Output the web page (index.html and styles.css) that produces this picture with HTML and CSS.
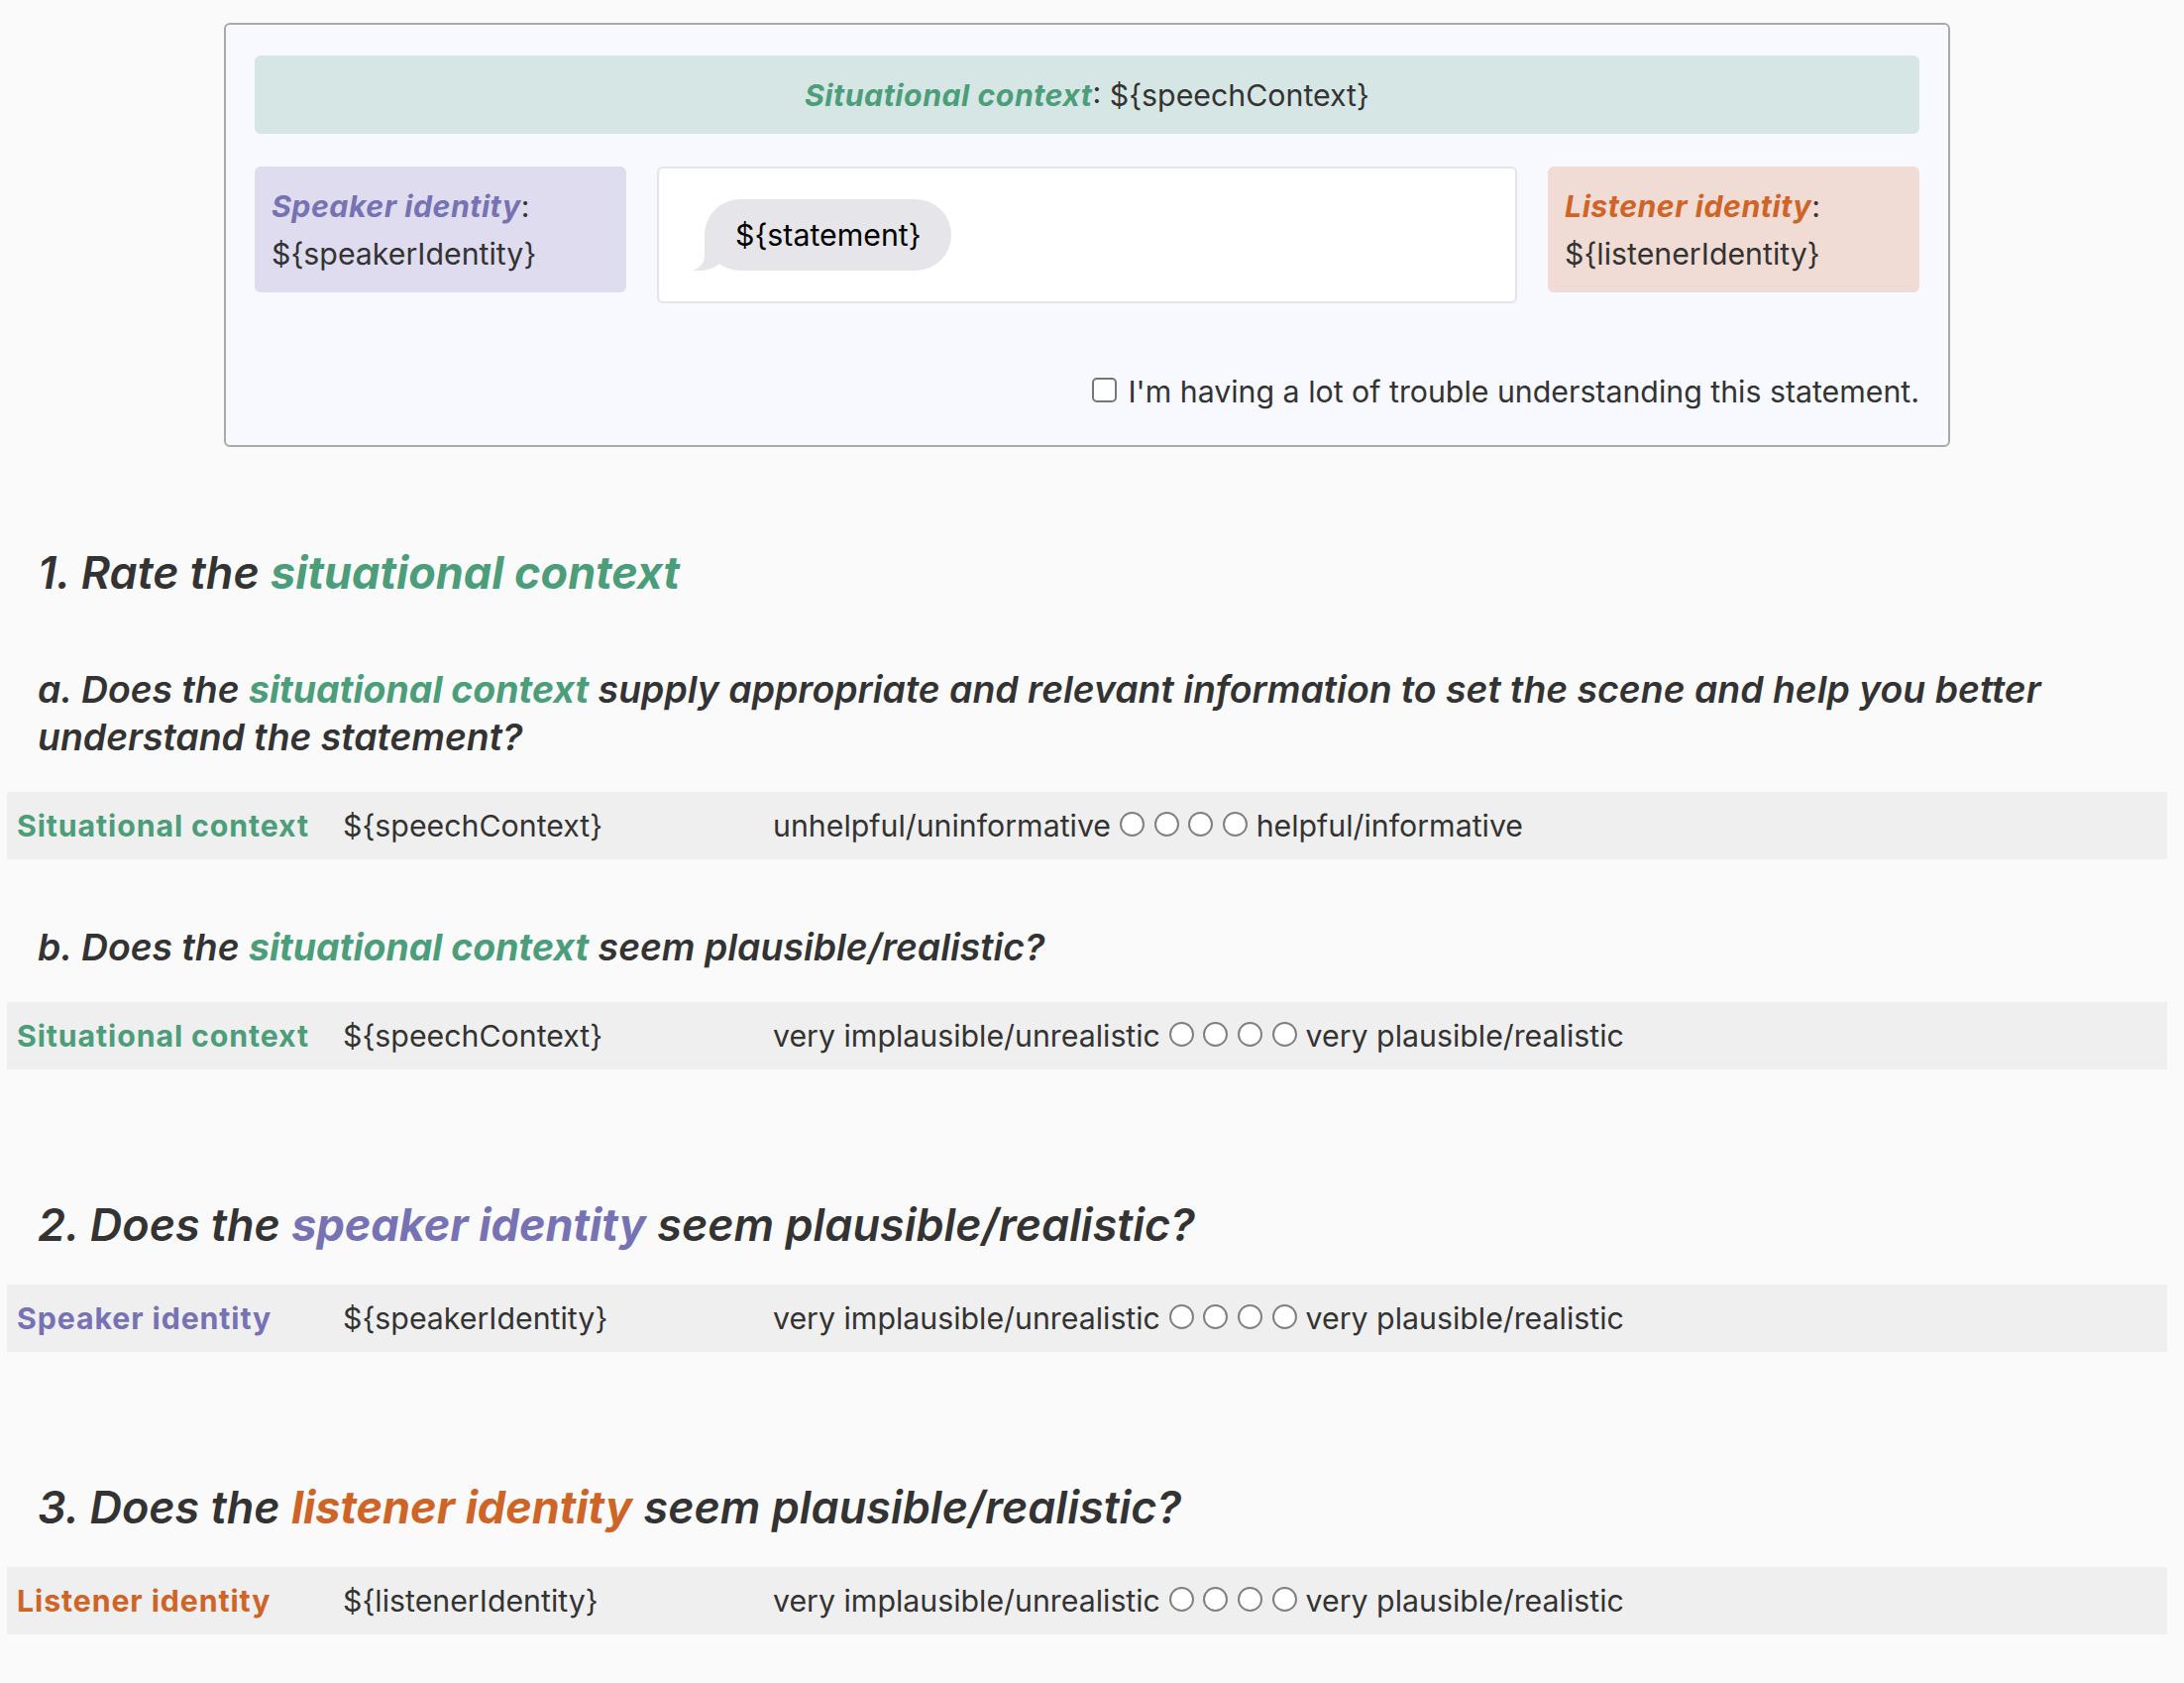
FILE: index.html
```html
<!DOCTYPE html>
<html lang="en">
<head>
  <meta charset="UTF-8">
  <meta name="viewport" content="width=device-width, initial-scale=1.0">
  <title> Statement rating </title>
  <link rel="stylesheet" href="styles.css">
</head>
<body>
  <div class="page">
    <div class="stimulus">
      <div class="context_bar"><span class="tag c_context">Situational context</span>: ${speechContext}</div>
      <div class="identities">
        <div class="identity speaker"><span class="tag c_speaker">Speaker identity</span>:<br>${speakerIdentity}</div>
        <div class="statement">
          <p class="bubble">${statement}</p>
        </div>
        <div class="identity listener"><span class="tag c_listener">Listener identity</span>:<br>${listenerIdentity}</div>
      </div>
      <label class="trouble"><input type="checkbox" class="check"> I'm having a lot of trouble understanding this statement.</label>
    </div>

    <section class="block first">
      <h2>1. Rate the <span class="hl c_context">situational context</span></h2>
      <h3>a. Does the <span class="hl c_context">situational context</span> supply appropriate and relevant information to set the scene and help you better understand the statement?</h3>
      <div class="rating_row">
        <span class="label c_context">Situational context</span>
        <span class="value">${speechContext}</span>
        <span class="scale">unhelpful/uninformative <input type="radio" name="ctx_help"> <input type="radio" name="ctx_help"> <input type="radio" name="ctx_help"> <input type="radio" name="ctx_help"> helpful/informative</span>
      </div>
      <h3 class="after_row">b. Does the <span class="hl c_context">situational context</span> seem plausible/realistic?</h3>
      <div class="rating_row">
        <span class="label c_context">Situational context</span>
        <span class="value">${speechContext}</span>
        <span class="scale">very implausible/unrealistic <input type="radio" name="ctx_real"> <input type="radio" name="ctx_real"> <input type="radio" name="ctx_real"> <input type="radio" name="ctx_real"> very plausible/realistic</span>
      </div>
    </section>

    <section class="block">
      <h2>2. Does the <span class="hl c_speaker">speaker identity</span> seem plausible/realistic?</h2>
      <div class="rating_row">
        <span class="label c_speaker">Speaker identity</span>
        <span class="value">${speakerIdentity}</span>
        <span class="scale">very implausible/unrealistic <input type="radio" name="spk_real"> <input type="radio" name="spk_real"> <input type="radio" name="spk_real"> <input type="radio" name="spk_real"> very plausible/realistic</span>
      </div>
    </section>

    <section class="block">
      <h2>3. Does the <span class="hl c_listener">listener identity</span> seem plausible/realistic?</h2>
      <div class="rating_row">
        <span class="label c_listener">Listener identity</span>
        <span class="value">${listenerIdentity}</span>
        <span class="scale">very implausible/unrealistic <input type="radio" name="lis_real"> <input type="radio" name="lis_real"> <input type="radio" name="lis_real"> <input type="radio" name="lis_real"> very plausible/realistic</span>
      </div>
    </section>
  </div>
</body>
</html>
```

FILE: styles.css
```css
html, body{  margin: 0;  padding: 0;  }
body{
  background: #fafafa;  color: #333;
  font-family: "Inter", "Noto Sans", "Liberation Sans", sans-serif;  font-size: 30.3px;  line-height: 48px;
}
h2, h3, p{  margin: 0;  }
.page{  padding: 0 17px 46px 7px;  }

/* colours per role */
.c_context{   color: #4c9e7b;  }
.c_speaker{   color: #7672b4;  }
.c_listener{  color: #cf6427;  }
.tag{  font-weight: 700;  font-style: italic;  letter-spacing: 0.5px;  }
.hl{   font-weight: 700;  }

/* stimulus card */
.stimulus{
  box-sizing: border-box;  width: 1742px;  margin: 23px auto 0;
  padding: 31px 29px 30px;  background: #f8f9fe;  border: 2px solid #a9a9a9;  border-radius: 6px;
}
.context_bar{
  background: #d6e6e4;  border-radius: 6px;  padding: 16px 0 15px;  text-align: center;
}
.identities{
  display: grid;  grid-template-columns: 375px 1fr 375px;  column-gap: 31px;  align-items: start;
  margin-top: 33px;
}
.identity{  border-radius: 6px;  padding: 16px 17px 15px;  }
.speaker{   background: #dedcee;  }
.listener{  background: #f0dcd5;  }
.statement{
  background: #fff;  border: 2px solid #e4e4e9;  border-radius: 6px;  padding: 31px 46px;
}
.bubble{
  position: relative;  display: inline-block;  background: #e5e5ea;  color: #000;
  line-height: 38px;  padding: 17px 30px 17px 31px;  border-radius: 36px;
}
.bubble::before{
  content: "";  position: absolute;  bottom: 0;  left: -11px;  width: 32px;  height: 34px;
  background: #e5e5ea;  border-bottom-right-radius: 26px 20px;
}
.bubble::after{
  content: "";  position: absolute;  bottom: 0;  left: -40px;  width: 40px;  height: 34px;
  background: #fff;  border-bottom-right-radius: 15px;
}
.trouble{  display: block;  text-align: right;  margin-top: 65px;  }
.check{
  appearance: none;  width: 25px;  height: 25px;  margin: 0 3px 0 0;  vertical-align: baseline;
  background: #fff;  border: 2px solid #767676;  border-radius: 5px;  box-sizing: border-box;
}

/* questions */
.block{  margin-top: 130px;  }
.block.first{  margin-top: 100px;  }
h2{
  font-size: 45px;  line-height: 53px;  font-weight: 600;  font-style: italic;
  padding: 0 30px 0 31px;  margin-bottom: 34px;
}
h3{
  font-size: 37.4px;  line-height: 48px;  font-weight: 600;  font-style: italic;
  padding: 0 30px 0 31px;  margin: 68px 0 31px;
}
.first h2{  margin-bottom: 0;  }
h3.after_row{  margin-top: 65px;  }

.rating_row{
  display: grid;  grid-template-columns: 329px 434px 1fr;
  background: #efefef;  padding: 10px;
}
.rating_row > .label{  font-weight: 700;  letter-spacing: 0.9px;  }
.scale input{
  appearance: none;  width: 25px;  height: 25px;  margin: 0 0.5px;  vertical-align: baseline;
  background: #fff;  border: 2px solid #808080;  border-radius: 50%;  box-sizing: border-box;
}
```
